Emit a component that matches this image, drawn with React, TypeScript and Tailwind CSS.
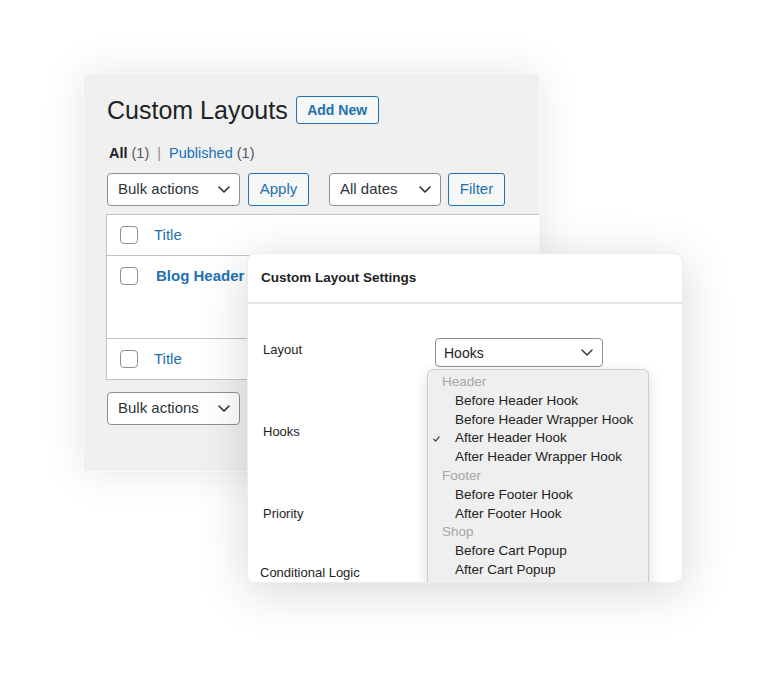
import React from "react";

const Chevron = ({ className = "" }: { className?: string }) => (
  <svg width="12" height="7" viewBox="0 0 12 7" className={className}>
    <path d="M1 1l5 5 5-5" fill="none" stroke="currentColor" strokeWidth="1.6" strokeLinecap="round" strokeLinejoin="round" />
  </svg>
);

const Checkbox = () => (
  <span className="block w-[18px] h-[18px] rounded-[4px] border border-[#8c8f94] bg-white shrink-0" />
);

const Select = ({ label, w }: { label: string; w: string }) => (
  <div className={`${w} h-full flex items-center justify-between pl-[10px] pr-[9px] bg-white border border-[#8c8f94] rounded-[4px] text-[15px] text-[#2c3338]`}>
    <span>{label}</span>
    <Chevron className="text-[#2c3338]" />
  </div>
);

const Btn = ({ label, w }: { label: string; w: string }) => (
  <div className={`${w} h-full flex items-center justify-center bg-[#f6f7f7] border border-[#2271b1] rounded-[3px] text-[15px] text-[#2271b1]`}>
    {label}
  </div>
);

const groups: { title: string; items: string[] }[] = [
  { title: "Header", items: ["Before Header Hook", "Before Header Wrapper Hook", "After Header Hook", "After Header Wrapper Hook"] },
  { title: "Footer", items: ["Before Footer Hook", "After Footer Hook"] },
  { title: "Shop", items: ["Before Cart Popup", "After Cart Popup"] },
];

export default function App() {
  return (
    <div
      className="relative w-[767px] h-[677px] bg-white overflow-hidden"
      style={{ fontFamily: '"Liberation Sans", Arial, sans-serif' }}
    >
      {/* Back card */}
      <div className="absolute left-[83px] top-[73px] w-[457px] h-[399px] bg-[#f0f0f1] border border-[#fafafa] shadow-[0_0_40px_rgba(0,0,0,0.10)] overflow-hidden">
        <div className="pl-[23px] pt-[20px]">
          <div className="flex items-center h-[32px]">
            <h1 className="text-[25px] leading-none text-[#1d2327]">Custom Layouts</h1>
            <div className="ml-[8px] h-[28px] w-[83px] flex items-center justify-center border border-[#2271b1] rounded-[3px] bg-[#f6f7f7] text-[#2271b1] text-[14px] font-semibold">
              Add New
            </div>
          </div>
          <div className="mt-[18px] h-[20px] flex items-center text-[14.5px] pl-[2px]">
            <span className="font-bold text-[#1d2327]">All</span>
            <span className="ml-[4px] text-[#50575e]">(1)</span>
            <span className="mx-[8px] text-[#8c8f94]">|</span>
            <span className="text-[#2271b1]">Published</span>
            <span className="ml-[4px] text-[#50575e]">(1)</span>
          </div>
          <div className="mt-[9px] h-[33px] flex items-center">
            <Select label="Bulk actions" w="w-[133px]" />
            <div className="ml-[8px] h-full">
              <Btn label="Apply" w="w-[61px]" />
            </div>
            <div className="ml-[20px] h-full">
              <Select label="All dates" w="w-[112px]" />
            </div>
            <div className="ml-[7px] h-full">
              <Btn label="Filter" w="w-[57px]" />
            </div>
          </div>
          <div className="mt-[8px] -ml-[1px] bg-white border border-r-0 border-[#c3c4c7] text-[15px]">
            <div className="h-[41px] flex items-center pl-[13px] border-b border-[#c3c4c7]">
              <Checkbox />
              <span className="ml-[16px] text-[#2271b1]">Title</span>
            </div>
            <div className="h-[83px] flex items-start pl-[13px] pt-[11px] border-b border-[#c3c4c7]">
              <Checkbox />
              <span className="ml-[18px] -mt-[1px] font-bold text-[#2271b1] leading-[20px]">Blog Header</span>
            </div>
            <div className="h-[40px] flex items-center pl-[13px]">
              <Checkbox />
              <span className="ml-[16px] text-[#2271b1]">Title</span>
            </div>
          </div>
          <div className="mt-[12px] h-[33px] flex">
            <Select label="Bulk actions" w="w-[133px]" />
          </div>
        </div>
      </div>

      {/* Settings card */}
      <div className="absolute left-[247px] top-[253px] w-[436px] h-[330px] bg-white rounded-[8px] border border-[#ececec] shadow-[0_8px_50px_rgba(0,0,0,0.16)] overflow-hidden">
        <div className="h-[50px] flex items-center pl-[13px] border-b-2 border-[#e3e3e3] text-[13.5px] font-bold text-[#1d2327]">
          Custom Layout Settings
        </div>
        <div className="relative flex flex-col pl-[15px] text-[13px] text-[#1e1e1e]">
          <div className="mt-[34px] flex items-start">
            <div className="w-[172px] pt-[3px] leading-[18px]">Layout</div>
            <div className="w-[168px] h-[29px] flex items-center justify-between pl-[8px] pr-[9px] border border-[#8c8f94] rounded-[4px] text-[14px] text-[#1e1e1e]">
              <span className="mt-[1px]">Hooks</span>
              <Chevron className="text-[#3c434a]" />
            </div>
          </div>
          <div className="mt-[56px] leading-[18px]">Hooks</div>
          <div className="mt-[64px] leading-[18px]">Priority</div>
          <div className="mt-[41px] -ml-[3px] leading-[18px]">Conditional Logic</div>
        </div>

        {/* Dropdown menu */}
        <div className="absolute left-[179px] top-[115px] w-[222px] h-[240px] bg-[#efefef] border border-[#cdcdcd] rounded-[6px] shadow-[0_4px_14px_rgba(0,0,0,0.14)] pt-[3px] text-[13.5px] leading-[18.8px]">
          {groups.map((g) => (
            <div key={g.title}>
              <div className="pl-[14px] text-[#a6a6a6]">{g.title}</div>
              {g.items.map((it) => (
                <div key={it} className="relative pl-[27px] text-[#222]">
                  {it === "After Header Hook" && (
                    <svg width="7" height="6" viewBox="0 0 7 6" className="absolute left-[5px] top-[7px]">
                      <path d="M0.8 3.2l1.8 1.9L6.2 0.8" fill="none" stroke="#333" strokeWidth="1.1" strokeLinecap="round" strokeLinejoin="round" />
                    </svg>
                  )}
                  {it}
                </div>
              ))}
            </div>
          ))}
        </div>
      </div>
    </div>
  );
}
